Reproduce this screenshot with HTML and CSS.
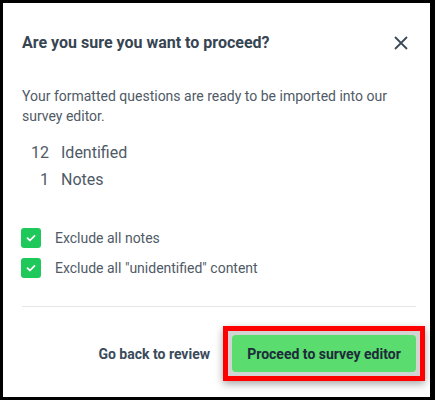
FILE: index.html
```html
<!DOCTYPE html>
<html lang="en">
<head>
    <meta charset="UTF-8">
    <meta name="viewport" content="width=device-width, initial-scale=1.0">
    <title>Proceed to survey editor</title>
    <link rel="stylesheet" href="styles.css">
</head>
<body>
    <div class="modal">
        <!-- header -->
        <div class="modal-header">
            <div class="modal-title">Are you sure you want to proceed?</div>
            <button class="close" aria-label="Close">
                <svg width="14" height="14" viewBox="0 0 14 14">
                    <path d="M1 1 L13 13 M13 1 L1 13" stroke="#3b4a59" stroke-width="1.8" fill="none"/>
                </svg>
            </button>
        </div>

        <p class="intro">Your formatted questions are ready to be imported into our survey editor.</p>

        <!-- counts -->
        <div class="counts">
            <span class="num">12</span><span class="label">Identified</span>
            <span class="num">1</span><span class="label">Notes</span>
        </div>

        <!-- options -->
        <div class="options">
            <label class="option">
                <span class="check">
                    <svg width="12" height="12" viewBox="0 0 12 12"><path d="M2.5 6.2 L5 8.5 L9.5 3.8" stroke="#fff" stroke-width="1.8" fill="none" stroke-linecap="round" stroke-linejoin="round"/></svg>
                </span>
                Exclude all notes
            </label>
            <label class="option">
                <span class="check">
                    <svg width="12" height="12" viewBox="0 0 12 12"><path d="M2.5 6.2 L5 8.5 L9.5 3.8" stroke="#fff" stroke-width="1.8" fill="none" stroke-linecap="round" stroke-linejoin="round"/></svg>
                </span>
                Exclude all "unidentified" content
            </label>
        </div>

        <div class="divider"></div>

        <!-- footer -->
        <div class="modal-footer">
            <button class="link-button">Go back to review</button>
            <span class="highlight">
                <button class="primary">Proceed to survey editor</button>
            </span>
        </div>
    </div>
</body>
</html>
```

FILE: styles.css
```css
body {
    margin: 0;
    background-color: #000;
    font-family: Roboto, "Liberation Sans", Arial, sans-serif;
}
.modal {
    background-color: #fff;
    margin: 3px 5px 3px 3px;
    height: 394px;
    padding: 30px 14px 0 19px;
    box-sizing: border-box;
}
.modal-header {
    display: flex;
    justify-content: space-between;
    align-items: center;
    padding-right: 8px;
}
.modal-title {
    font-size: 16px;
    line-height: 20px;
    font-weight: bold;
    color: #374553;
}
.close {
    border: none;
    background: none;
    padding: 0;
    width: 14px;
    height: 14px;
    display: flex;
    cursor: pointer;
}
.intro {
    margin: 33px 0 0;
    font-size: 14px;
    line-height: 20px;
    color: #4f5a66;
}
.counts {
    margin-top: 13px;
    display: grid;
    grid-template-columns: 27px auto;
    column-gap: 12px;
    justify-content: start;
    font-size: 16px;
    line-height: 27px;
    color: #4f5a66;
}
.counts .num {
    text-align: right;
}
.options {
    margin-top: 35px;
    display: flex;
    flex-direction: column;
    gap: 10px;
}
.option {
    display: flex;
    align-items: center;
    gap: 14px;
    margin-left: -1px;
    height: 20px;
    font-size: 14px;
    color: #4f5a66;
}
.check {
    width: 20px;
    height: 20px;
    border-radius: 3px;
    background-color: #1fc85a;
    display: flex;
    align-items: center;
    justify-content: center;
}
.divider {
    margin-top: 28px;
    height: 1px;
    background-color: #e6e6e6;
}
.modal-footer {
    margin-top: 28px;
    display: flex;
    justify-content: flex-end;
    align-items: center;
    gap: 22px;
}
.link-button {
    border: none;
    background: none;
    padding: 0;
    font-family: inherit;
    font-size: 14px;
    font-weight: bold;
    color: #3b4a5a;
    cursor: pointer;
}
/* red annotation box around the main button */
.highlight {
    display: flex;
    margin: -9px;
    padding: 4px;
    border: 5px solid #ff0000;
    background-color: #d3d3d3;
    box-shadow: 0 3px 8px rgba(0, 0, 0, 0.35);
}
.primary {
    height: 37px;
    width: 184px;
    border: none;
    border-radius: 4px;
    background-color: #5bdc6e;
    font-family: inherit;
    font-size: 14px;
    font-weight: bold;
    color: #1d2b3a;
    cursor: pointer;
}
```
